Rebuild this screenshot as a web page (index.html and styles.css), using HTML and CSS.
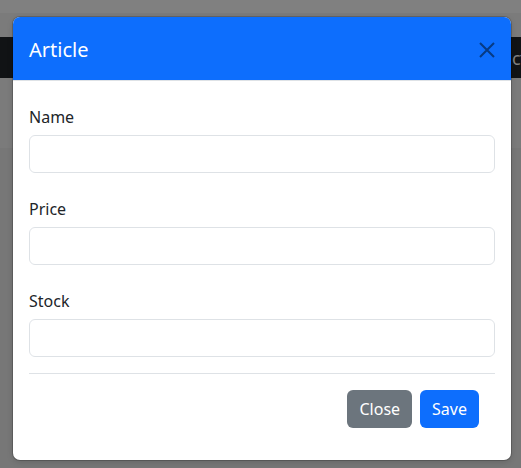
FILE: index.html
```html
<!DOCTYPE html>
<html lang="en">
<head>
<meta charset="utf-8">
<title>Article</title>
<link rel="stylesheet" href="styles.css">
</head>
<body>
<div class="page">
  <div class="band band-top"></div>
  <div class="band band-sub"></div>
  <div class="navbar"><span class="nav-text">ct</span></div>
  <div class="band band-hero"></div>
  <div class="band band-rest"></div>
</div>

<div class="modal">
  <div class="modal-header">
    <h5 class="modal-title">Article</h5>
    <button class="btn-close" aria-label="Close">
      <svg width="16" height="16" viewBox="0 0 16 16"><path d="M1 1 L15 15 M15 1 L1 15" stroke="currentColor" stroke-width="2" fill="none"/></svg>
    </button>
  </div>
  <div class="modal-body">
    <div class="group">
      <label class="label">Name</label>
      <input class="input" type="text">
    </div>
    <div class="group">
      <label class="label">Price</label>
      <input class="input" type="text">
    </div>
    <div class="group last">
      <label class="label">Stock</label>
      <input class="input" type="text">
    </div>
    <hr class="divider">
    <div class="footer">
      <button class="btn btn-secondary">Close</button>
      <button class="btn btn-primary">Save</button>
    </div>
  </div>
</div>
</body>
</html>
```

FILE: styles.css
```css
* { box-sizing: border-box; }
html, body {
  margin: 0;
  padding: 0;
  height: 100%;
  overflow: hidden;
  font-family: "Noto Sans", "Open Sans", sans-serif;
}
.page {
  display: flex;
  flex-direction: column;
  height: 468px;
  background: #777777;
}
.band-top { height: 13px; background: #808080; }
.band-sub { height: 24px; background: #7b7b7b; }
.navbar {
  height: 41px;
  background: #111315;
  display: flex;
  align-items: center;
  padding-left: 512px;
  white-space: nowrap;
  overflow: hidden;
}
.nav-text {
  color: #808080;
  font-size: 18px;
  letter-spacing: -1px;
}
.band-hero { height: 70px; background: #7b7b7b; }
.band-rest { flex: 1; background: #777777; }

.modal {
  position: absolute;
  left: 13px;
  top: 17px;
  width: 498px;
  height: 443px;
  background: #fff;
  border-radius: 7px;
  overflow: hidden;
  box-shadow: 0 0 0 1px rgba(0,0,0,0.18), 0 2px 6px rgba(0,0,0,0.15);
  display: flex;
  flex-direction: column;
}
.modal-header {
  background: #0d6efd;
  height: 64px;
  border-bottom: 1px solid #dee2e6;
  display: flex;
  align-items: center;
  justify-content: space-between;
  padding: 2px 16px 0 16px;
}
.modal-title {
  margin: 0;
  color: #fff;
  font-weight: 400;
  font-size: 20px;
  line-height: 30px;
}
.btn-close {
  border: 0;
  background: transparent;
  padding: 0;
  width: 16px;
  height: 16px;
  color: #073a83;
  display: flex;
}
.modal-body {
  padding: 22px 16px 0 16px;
  display: flex;
  flex-direction: column;
}
.group {
  display: flex;
  flex-direction: column;
  margin-bottom: 22px;
}
.group.last { margin-bottom: 0; }
.label {
  font-size: 16px;
  line-height: 24px;
  color: #212529;
  padding-top: 2px;
  margin-bottom: 6px;
}
.input {
  height: 38px;
  border: 1px solid #dee2e6;
  border-radius: 6px;
  background: #fff;
  font-family: inherit;
  font-size: 16px;
}
.divider {
  margin: 16px 0 0 0;
  border: 0;
  border-top: 1px solid #dee2e6;
  height: 0;
}
.footer {
  display: flex;
  justify-content: flex-end;
  gap: 8px;
  margin-top: 16px;
  padding-right: 16px;
}
.btn {
  height: 38px;
  padding: 0 12px;
  border: 0;
  border-radius: 6px;
  color: #fff;
  font-family: inherit;
  font-size: 16px;
  line-height: 24px;
}
.btn-secondary { background: #6c757d; }
.btn-primary { background: #0d6efd; }
```
